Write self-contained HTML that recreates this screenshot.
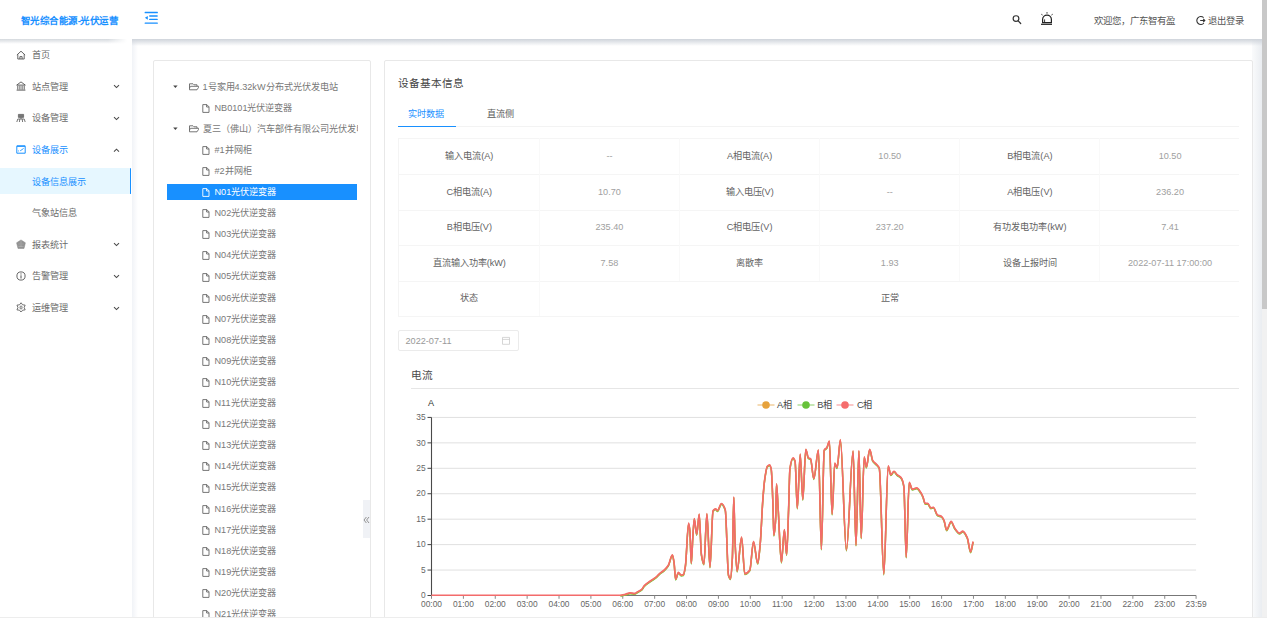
<!DOCTYPE html><html lang="zh-CN"><head><meta charset="utf-8"><style>
*{box-sizing:border-box;margin:0;padding:0}
html,body{width:1267px;height:618px;overflow:hidden;background:#fff;font-family:"Liberation Sans",sans-serif;color:#606266}
.a{position:absolute;white-space:nowrap}
.t9{font-size:9.13px;line-height:12px}
.t10{font-size:10.66px;line-height:14px}
</style></head><body>

<div class="a" style="left:0;top:0;width:1267px;height:39px;background:#fff"></div>
<div class="a" style="left:0;top:39px;width:127px;height:5px;background:linear-gradient(#d5d9de,rgba(255,255,255,0));-webkit-mask-image:linear-gradient(90deg,#000 85%,transparent)"></div>
<div class="a" style="left:132px;top:39px;width:6px;height:579px;background:linear-gradient(90deg,#f1f3f7,rgba(255,255,255,0))"></div>
<div class="a" style="left:21px;top:15.2px;font-size:9.5px;line-height:12px;font-weight:bold;letter-spacing:-0.55px;color:#1890ff">智光综合能源-光伏运营</div>
<svg class="a" style="left:144px;top:11px" width="15" height="14" viewBox="0 0 15 14">
<rect x="0.6" y="0.85" width="13.3" height="1.4" rx="0.6" fill="#1890ff"/>
<rect x="5.1" y="4.3" width="8.7" height="1.4" rx="0.6" fill="#1890ff"/>
<rect x="5.1" y="7.7" width="8.7" height="1.4" rx="0.6" fill="#1890ff"/>
<rect x="0.6" y="11.4" width="13.3" height="1.4" rx="0.6" fill="#1890ff"/>
<path d="M0.9 6.8 L3.8 4.9 L3.8 8.7Z" fill="#1890ff"/>
</svg>
<svg class="a" style="left:1010px;top:13px" width="14" height="14" viewBox="0 0 14 14">
<circle cx="6" cy="5.6" r="2.85" fill="none" stroke="#333" stroke-width="1.2"/>
<path d="M8.2 7.9 L10.7 10.5" stroke="#333" stroke-width="1.25" stroke-linecap="round"/>
</svg>
<svg class="a" style="left:1039px;top:10px" width="16" height="17" viewBox="0 0 16 17">
<path d="M3.6 12.7 V9.6 A4.4 4.4 0 0 1 12.4 9.6 V12.7 Z" fill="none" stroke="#222" stroke-width="1.2"/>
<path d="M5.6 12.3 V9.4" stroke="#222" stroke-width="0.9"/>
<rect x="2" y="13.7" width="11" height="1.2" fill="#222"/>
<path d="M8 2.2 V3.6 M2.4 4.3 L3.5 5 M13.6 4.3 L12.5 5" stroke="#222" stroke-width="1"/>
</svg>
<div class="a" style="left:1094.3px;top:15px;font-size:9.45px;line-height:12px;color:#555">欢迎您，广东智有盈</div>
<svg class="a" style="left:1195px;top:15px" width="11" height="11" viewBox="0 0 11 11">
<path d="M8.6 2.6 A4 4 0 1 0 8.9 8" fill="none" stroke="#333" stroke-width="1.1"/>
<path d="M5.2 5.5 H9.8 M8.2 3.9 L9.8 5.5 L8.2 7.1" fill="none" stroke="#333" stroke-width="1.1"/>
</svg>
<div class="a" style="left:1207.8px;top:15px;font-size:9.3px;line-height:12px;color:#555">退出登录</div>
<div class="a" style="left:1252px;top:39px;width:10px;height:579px;background:linear-gradient(90deg,#fafbfc,#eaedf1)"></div>
<div class="a" style="left:1262px;top:309px;width:5px;height:309px;background:#f1f1f1"></div>
<div class="a" style="left:1262px;top:0;width:5px;height:309px;background:#c8c8c8"></div>
<div class="a" style="left:132px;top:39px;width:1130px;height:7px;background:linear-gradient(#cfd4db,rgba(255,255,255,0))"></div>
<div class="a" style="left:0;top:168px;width:130px;height:26.2px;background:#e6f7ff"></div>
<div class="a" style="left:129.6px;top:168px;width:1.7px;height:26.2px;background:#1890ff;border-radius:1px"></div>
<div class="a t9" style="left:32px;top:49.10px;color:#6c6c6c">首页</div>
<svg class="a" style="left:15.5px;top:49.5px" width="10" height="10" viewBox="0 0 10 10"><path d="M0.9 5 L5 1.2 L9.1 5 M1.8 4.3 V9 H8.2 V4.3 M3.9 9 V6.6 H6.1 V9" fill="none" stroke="#555" stroke-width="0.9" stroke-linejoin="round"/></svg>
<div class="a t9" style="left:32px;top:80.80px;color:#6c6c6c">站点管理</div>
<svg class="a" style="left:15.5px;top:81.2px" width="10" height="10" viewBox="0 0 10 10"><path d="M0.7 4.1 L5 0.9 L9.3 4.1Z" fill="none" stroke="#555" stroke-width="0.9" stroke-linejoin="round"/><path d="M1.8 4.7V8.6M3.9 4.7V8.6M6.1 4.7V8.6M8.2 4.7V8.6M0.6 9.1H9.4" stroke="#555" stroke-width="0.95"/></svg>
<svg class="a" style="left:113.3px;top:84.4px" width="7" height="5" viewBox="0 0 7 5"><path d="M1 1.2 L3.5 3.6 L6 1.2" fill="none" stroke="#4a4a4a" stroke-width="1.05"/></svg>
<div class="a t9" style="left:32px;top:112.40px;color:#6c6c6c">设备管理</div>
<svg class="a" style="left:15.5px;top:112.8px" width="10" height="10" viewBox="0 0 10 10"><path d="M2.4 1.4 H7.6 V4.4 H2.4Z" fill="#777" stroke="#666" stroke-width="0.8"/><path d="M5 4.4 V6 M1.8 6 H8.2 M1.8 6 L0.8 9 M8.2 6 L9.2 9 M3.8 6 L3.4 9 M6.2 6 L6.6 9" stroke="#666" stroke-width="0.9" fill="none"/></svg>
<svg class="a" style="left:113.3px;top:116.0px" width="7" height="5" viewBox="0 0 7 5"><path d="M1 1.2 L3.5 3.6 L6 1.2" fill="none" stroke="#4a4a4a" stroke-width="1.05"/></svg>
<div class="a t9" style="left:32px;top:144.00px;color:#1890ff">设备展示</div>
<svg class="a" style="left:15.5px;top:144.4px" width="10" height="10" viewBox="0 0 10 10"><path d="M0.8 2.2 H9.2 V9.2 H0.8Z" fill="none" stroke="#1890ff" stroke-width="1"/><path d="M0.8 2 H9.2" stroke="#1890ff" stroke-width="1.3"/><path d="M2.2 7 L3 6.8 M4.2 6.8 L6 5.6 L7.6 4.4" fill="none" stroke="#1890ff" stroke-width="0.9"/></svg>
<svg class="a" style="left:113.3px;top:147.6px" width="7" height="5" viewBox="0 0 7 5"><path d="M1 3.6 L3.5 1.2 L6 3.6" fill="none" stroke="#4a4a4a" stroke-width="1.05"/></svg>
<div class="a t9" style="left:32px;top:175.60px;color:#1890ff">设备信息展示</div>
<div class="a t9" style="left:32px;top:207.20px;color:#6c6c6c">气象站信息</div>
<div class="a t9" style="left:32px;top:238.80px;color:#6c6c6c">报表统计</div>
<svg class="a" style="left:15.5px;top:239.2px" width="10" height="10" viewBox="0 0 10 10"><path d="M5 0.9 L9.4 3.8 L8 9.5 H2 L0.6 3.8Z" fill="#939393" stroke="#888" stroke-width="0.5" stroke-linejoin="round"/><path d="M5 1.5 V8 M2.6 5 H3.6 M6.4 5 H7.4 M2.4 7.4 H7.6" stroke="#c8c8c8" stroke-width="0.45"/></svg>
<svg class="a" style="left:113.3px;top:242.39999999999998px" width="7" height="5" viewBox="0 0 7 5"><path d="M1 1.2 L3.5 3.6 L6 1.2" fill="none" stroke="#4a4a4a" stroke-width="1.05"/></svg>
<div class="a t9" style="left:32px;top:270.40px;color:#6c6c6c">告警管理</div>
<svg class="a" style="left:15.5px;top:270.8px" width="10" height="10" viewBox="0 0 10 10"><circle cx="5" cy="5" r="4.1" fill="none" stroke="#555" stroke-width="0.9"/><path d="M5 4.3 V7.5" stroke="#555" stroke-width="1"/><circle cx="5" cy="2.9" r="0.6" fill="#555"/></svg>
<svg class="a" style="left:113.3px;top:274.0px" width="7" height="5" viewBox="0 0 7 5"><path d="M1 1.2 L3.5 3.6 L6 1.2" fill="none" stroke="#4a4a4a" stroke-width="1.05"/></svg>
<div class="a t9" style="left:32px;top:302.00px;color:#6c6c6c">运维管理</div>
<svg class="a" style="left:15.5px;top:302.4px" width="10" height="10" viewBox="0 0 10 10"><path d="M5.05 0.75 L3.50 2.82 L0.94 3.13 L1.95 5.50 L0.94 7.88 L3.50 8.18 L5.05 10.25 L6.60 8.18 L9.16 7.88 L8.15 5.50 L9.16 3.12 L6.60 2.82Z" fill="none" stroke="#5a5a5a" stroke-width="0.85" stroke-linejoin="round"/><rect x="4.1" y="4" width="1.9" height="3" rx="0.9" fill="none" stroke="#5a5a5a" stroke-width="0.8"/></svg>
<svg class="a" style="left:113.3px;top:305.59999999999997px" width="7" height="5" viewBox="0 0 7 5"><path d="M1 1.2 L3.5 3.6 L6 1.2" fill="none" stroke="#4a4a4a" stroke-width="1.05"/></svg>
<div class="a" style="left:153px;top:60px;width:218px;height:600px;border:1px solid #e8e8e8;border-radius:2px;background:#fff"></div>
<div class="a" style="left:384px;top:60px;width:869px;height:600px;border:1px solid #e8e8e8;border-radius:2px;background:#fff"></div>
<svg class="a" style="left:172.5px;top:85.0px" width="5" height="4" viewBox="0 0 5 4"><path d="M0.2 0.6 H4.6 L2.4 2.9Z" fill="#444"/></svg>
<svg class="a" style="left:189px;top:83.2px" width="10" height="8" viewBox="0 0 10 8"><path d="M0.5 0.8 H4 L5 1.8 H8 V3.3 M0.5 0.8 V6.8 H8 L9.6 4.3 V3.3 H1.5 L0.5 5" fill="none" stroke="#666" stroke-width="0.9" stroke-linejoin="round"/></svg>
<div class="a t9" style="left:202.5px;top:80.5px;color:#787878;width:155px;overflow:hidden">1号家用4.32kW分布式光伏发电站</div>
<svg class="a" style="left:202px;top:103.69999999999999px" width="8" height="9" viewBox="0 0 8 9"><path d="M0.8 0.6 H4.8 L7 2.8 V8.4 H0.8Z M4.6 0.6 V3 H7" fill="none" stroke="#666" stroke-width="0.9"/></svg>
<div class="a t9" style="left:214.5px;top:101.6px;color:#787878">NB0101光伏逆变器</div>
<svg class="a" style="left:172.5px;top:127.19999999999999px" width="5" height="4" viewBox="0 0 5 4"><path d="M0.2 0.6 H4.6 L2.4 2.9Z" fill="#444"/></svg>
<svg class="a" style="left:189px;top:125.39999999999999px" width="10" height="8" viewBox="0 0 10 8"><path d="M0.5 0.8 H4 L5 1.8 H8 V3.3 M0.5 0.8 V6.8 H8 L9.6 4.3 V3.3 H1.5 L0.5 5" fill="none" stroke="#666" stroke-width="0.9" stroke-linejoin="round"/></svg>
<div class="a t9" style="left:202.5px;top:122.69999999999999px;color:#787878;width:155px;overflow:hidden">夏三（佛山）汽车部件有限公司光伏发电站</div>
<svg class="a" style="left:202px;top:145.9px" width="8" height="9" viewBox="0 0 8 9"><path d="M0.8 0.6 H4.8 L7 2.8 V8.4 H0.8Z M4.6 0.6 V3 H7" fill="none" stroke="#666" stroke-width="0.9"/></svg>
<div class="a t9" style="left:214.5px;top:143.8px;color:#787878">#1并网柜</div>
<svg class="a" style="left:202px;top:167.0px" width="8" height="9" viewBox="0 0 8 9"><path d="M0.8 0.6 H4.8 L7 2.8 V8.4 H0.8Z M4.6 0.6 V3 H7" fill="none" stroke="#666" stroke-width="0.9"/></svg>
<div class="a t9" style="left:214.5px;top:164.9px;color:#787878">#2并网柜</div>
<div class="a" style="left:167px;top:184.1px;width:190px;height:16px;background:#1890ff"></div>
<svg class="a" style="left:202px;top:188.1px" width="8" height="9" viewBox="0 0 8 9"><path d="M0.8 0.6 H4.8 L7 2.8 V8.4 H0.8Z M4.6 0.6 V3 H7" fill="none" stroke="#fff" stroke-width="0.9"/></svg>
<div class="a t9" style="left:214.5px;top:186.0px;color:#fff">N01光伏逆变器</div>
<svg class="a" style="left:202px;top:209.20000000000002px" width="8" height="9" viewBox="0 0 8 9"><path d="M0.8 0.6 H4.8 L7 2.8 V8.4 H0.8Z M4.6 0.6 V3 H7" fill="none" stroke="#666" stroke-width="0.9"/></svg>
<div class="a t9" style="left:214.5px;top:207.10000000000002px;color:#787878">N02光伏逆变器</div>
<svg class="a" style="left:202px;top:230.3px" width="8" height="9" viewBox="0 0 8 9"><path d="M0.8 0.6 H4.8 L7 2.8 V8.4 H0.8Z M4.6 0.6 V3 H7" fill="none" stroke="#666" stroke-width="0.9"/></svg>
<div class="a t9" style="left:214.5px;top:228.20000000000002px;color:#787878">N03光伏逆变器</div>
<svg class="a" style="left:202px;top:251.4px" width="8" height="9" viewBox="0 0 8 9"><path d="M0.8 0.6 H4.8 L7 2.8 V8.4 H0.8Z M4.6 0.6 V3 H7" fill="none" stroke="#666" stroke-width="0.9"/></svg>
<div class="a t9" style="left:214.5px;top:249.3px;color:#787878">N04光伏逆变器</div>
<svg class="a" style="left:202px;top:272.5px" width="8" height="9" viewBox="0 0 8 9"><path d="M0.8 0.6 H4.8 L7 2.8 V8.4 H0.8Z M4.6 0.6 V3 H7" fill="none" stroke="#666" stroke-width="0.9"/></svg>
<div class="a t9" style="left:214.5px;top:270.4px;color:#787878">N05光伏逆变器</div>
<svg class="a" style="left:202px;top:293.6px" width="8" height="9" viewBox="0 0 8 9"><path d="M0.8 0.6 H4.8 L7 2.8 V8.4 H0.8Z M4.6 0.6 V3 H7" fill="none" stroke="#666" stroke-width="0.9"/></svg>
<div class="a t9" style="left:214.5px;top:291.5px;color:#787878">N06光伏逆变器</div>
<svg class="a" style="left:202px;top:314.70000000000005px" width="8" height="9" viewBox="0 0 8 9"><path d="M0.8 0.6 H4.8 L7 2.8 V8.4 H0.8Z M4.6 0.6 V3 H7" fill="none" stroke="#666" stroke-width="0.9"/></svg>
<div class="a t9" style="left:214.5px;top:312.6px;color:#787878">N07光伏逆变器</div>
<svg class="a" style="left:202px;top:335.80000000000007px" width="8" height="9" viewBox="0 0 8 9"><path d="M0.8 0.6 H4.8 L7 2.8 V8.4 H0.8Z M4.6 0.6 V3 H7" fill="none" stroke="#666" stroke-width="0.9"/></svg>
<div class="a t9" style="left:214.5px;top:333.70000000000005px;color:#787878">N08光伏逆变器</div>
<svg class="a" style="left:202px;top:356.90000000000003px" width="8" height="9" viewBox="0 0 8 9"><path d="M0.8 0.6 H4.8 L7 2.8 V8.4 H0.8Z M4.6 0.6 V3 H7" fill="none" stroke="#666" stroke-width="0.9"/></svg>
<div class="a t9" style="left:214.5px;top:354.8px;color:#787878">N09光伏逆变器</div>
<svg class="a" style="left:202px;top:378.00000000000006px" width="8" height="9" viewBox="0 0 8 9"><path d="M0.8 0.6 H4.8 L7 2.8 V8.4 H0.8Z M4.6 0.6 V3 H7" fill="none" stroke="#666" stroke-width="0.9"/></svg>
<div class="a t9" style="left:214.5px;top:375.90000000000003px;color:#787878">N10光伏逆变器</div>
<svg class="a" style="left:202px;top:399.1px" width="8" height="9" viewBox="0 0 8 9"><path d="M0.8 0.6 H4.8 L7 2.8 V8.4 H0.8Z M4.6 0.6 V3 H7" fill="none" stroke="#666" stroke-width="0.9"/></svg>
<div class="a t9" style="left:214.5px;top:397.0px;color:#787878">N11光伏逆变器</div>
<svg class="a" style="left:202px;top:420.20000000000005px" width="8" height="9" viewBox="0 0 8 9"><path d="M0.8 0.6 H4.8 L7 2.8 V8.4 H0.8Z M4.6 0.6 V3 H7" fill="none" stroke="#666" stroke-width="0.9"/></svg>
<div class="a t9" style="left:214.5px;top:418.1px;color:#787878">N12光伏逆变器</div>
<svg class="a" style="left:202px;top:441.30000000000007px" width="8" height="9" viewBox="0 0 8 9"><path d="M0.8 0.6 H4.8 L7 2.8 V8.4 H0.8Z M4.6 0.6 V3 H7" fill="none" stroke="#666" stroke-width="0.9"/></svg>
<div class="a t9" style="left:214.5px;top:439.20000000000005px;color:#787878">N13光伏逆变器</div>
<svg class="a" style="left:202px;top:462.40000000000003px" width="8" height="9" viewBox="0 0 8 9"><path d="M0.8 0.6 H4.8 L7 2.8 V8.4 H0.8Z M4.6 0.6 V3 H7" fill="none" stroke="#666" stroke-width="0.9"/></svg>
<div class="a t9" style="left:214.5px;top:460.3px;color:#787878">N14光伏逆变器</div>
<svg class="a" style="left:202px;top:483.50000000000006px" width="8" height="9" viewBox="0 0 8 9"><path d="M0.8 0.6 H4.8 L7 2.8 V8.4 H0.8Z M4.6 0.6 V3 H7" fill="none" stroke="#666" stroke-width="0.9"/></svg>
<div class="a t9" style="left:214.5px;top:481.40000000000003px;color:#787878">N15光伏逆变器</div>
<svg class="a" style="left:202px;top:504.6px" width="8" height="9" viewBox="0 0 8 9"><path d="M0.8 0.6 H4.8 L7 2.8 V8.4 H0.8Z M4.6 0.6 V3 H7" fill="none" stroke="#666" stroke-width="0.9"/></svg>
<div class="a t9" style="left:214.5px;top:502.5px;color:#787878">N16光伏逆变器</div>
<svg class="a" style="left:202px;top:525.7px" width="8" height="9" viewBox="0 0 8 9"><path d="M0.8 0.6 H4.8 L7 2.8 V8.4 H0.8Z M4.6 0.6 V3 H7" fill="none" stroke="#666" stroke-width="0.9"/></svg>
<div class="a t9" style="left:214.5px;top:523.6px;color:#787878">N17光伏逆变器</div>
<svg class="a" style="left:202px;top:546.8000000000001px" width="8" height="9" viewBox="0 0 8 9"><path d="M0.8 0.6 H4.8 L7 2.8 V8.4 H0.8Z M4.6 0.6 V3 H7" fill="none" stroke="#666" stroke-width="0.9"/></svg>
<div class="a t9" style="left:214.5px;top:544.7px;color:#787878">N18光伏逆变器</div>
<svg class="a" style="left:202px;top:567.9px" width="8" height="9" viewBox="0 0 8 9"><path d="M0.8 0.6 H4.8 L7 2.8 V8.4 H0.8Z M4.6 0.6 V3 H7" fill="none" stroke="#666" stroke-width="0.9"/></svg>
<div class="a t9" style="left:214.5px;top:565.8px;color:#787878">N19光伏逆变器</div>
<svg class="a" style="left:202px;top:589.0000000000001px" width="8" height="9" viewBox="0 0 8 9"><path d="M0.8 0.6 H4.8 L7 2.8 V8.4 H0.8Z M4.6 0.6 V3 H7" fill="none" stroke="#666" stroke-width="0.9"/></svg>
<div class="a t9" style="left:214.5px;top:586.9000000000001px;color:#787878">N20光伏逆变器</div>
<svg class="a" style="left:202px;top:610.1px" width="8" height="9" viewBox="0 0 8 9"><path d="M0.8 0.6 H4.8 L7 2.8 V8.4 H0.8Z M4.6 0.6 V3 H7" fill="none" stroke="#666" stroke-width="0.9"/></svg>
<div class="a t9" style="left:214.5px;top:608.0px;color:#787878">N21光伏逆变器</div>
<div class="a" style="left:362.5px;top:500px;width:7.5px;height:37.5px;background:#f0f2f6"></div>
<svg class="a" style="left:363px;top:516px" width="7" height="8" viewBox="0 0 7 8"><path d="M3.4 1 L1 4 L3.4 7 M6 1 L3.6 4 L6 7" fill="none" stroke="#888" stroke-width="0.9"/></svg>
<div class="a t10" style="left:398px;top:76px;color:#444">设备基本信息</div>
<div class="a" style="left:398px;top:126px;width:841px;height:1px;background:#f3f3f3"></div>
<div class="a" style="left:398px;top:125.8px;width:58px;height:1.6px;background:#1890ff"></div>
<div class="a t9" style="left:408.3px;top:107.8px;color:#1890ff">实时数据</div>
<div class="a t9" style="left:487px;top:107.8px;color:#5a5a5a">直流侧</div>
<div class="a" style="left:398px;top:138.4px;width:841px;height:1px;background:#f5f5f5"></div>
<div class="a" style="left:398px;top:174px;width:841px;height:1px;background:#f5f5f5"></div>
<div class="a" style="left:398px;top:209.6px;width:841px;height:1px;background:#f5f5f5"></div>
<div class="a" style="left:398px;top:245.1px;width:841px;height:1px;background:#f5f5f5"></div>
<div class="a" style="left:398px;top:280.7px;width:841px;height:1px;background:#f5f5f5"></div>
<div class="a" style="left:398px;top:316.3px;width:841px;height:1px;background:#f5f5f5"></div>
<div class="a" style="left:398px;top:138.4px;width:1px;height:178px;background:#f4f4f4"></div>
<div class="a" style="left:538.75px;top:138.4px;width:1px;height:178px;background:#f9f9f9"></div>
<div class="a" style="left:678.90px;top:138.4px;width:1px;height:142.3px;background:#f9f9f9"></div>
<div class="a" style="left:819.05px;top:138.4px;width:1px;height:142.3px;background:#f9f9f9"></div>
<div class="a" style="left:959.20px;top:138.4px;width:1px;height:142.3px;background:#f9f9f9"></div>
<div class="a" style="left:1099.35px;top:138.4px;width:1px;height:142.3px;background:#f9f9f9"></div>
<div class="a t9" style="left:399.30px;width:140px;text-align:center;top:149.90px;color:#626262">输入电流(A)</div>
<div class="a t9" style="left:539.45px;width:140px;text-align:center;top:149.90px;color:#a0a0a0">--</div>
<div class="a t9" style="left:679.60px;width:140px;text-align:center;top:149.90px;color:#626262">A相电流(A)</div>
<div class="a t9" style="left:819.75px;width:140px;text-align:center;top:149.90px;color:#a0a0a0">10.50</div>
<div class="a t9" style="left:959.90px;width:140px;text-align:center;top:149.90px;color:#626262">B相电流(A)</div>
<div class="a t9" style="left:1100.05px;width:140px;text-align:center;top:149.90px;color:#a0a0a0">10.50</div>
<div class="a t9" style="left:399.30px;width:140px;text-align:center;top:185.50px;color:#626262">C相电流(A)</div>
<div class="a t9" style="left:539.45px;width:140px;text-align:center;top:185.50px;color:#a0a0a0">10.70</div>
<div class="a t9" style="left:679.60px;width:140px;text-align:center;top:185.50px;color:#626262">输入电压(V)</div>
<div class="a t9" style="left:819.75px;width:140px;text-align:center;top:185.50px;color:#a0a0a0">--</div>
<div class="a t9" style="left:959.90px;width:140px;text-align:center;top:185.50px;color:#626262">A相电压(V)</div>
<div class="a t9" style="left:1100.05px;width:140px;text-align:center;top:185.50px;color:#a0a0a0">236.20</div>
<div class="a t9" style="left:399.30px;width:140px;text-align:center;top:221.05px;color:#626262">B相电压(V)</div>
<div class="a t9" style="left:539.45px;width:140px;text-align:center;top:221.05px;color:#a0a0a0">235.40</div>
<div class="a t9" style="left:679.60px;width:140px;text-align:center;top:221.05px;color:#626262">C相电压(V)</div>
<div class="a t9" style="left:819.75px;width:140px;text-align:center;top:221.05px;color:#a0a0a0">237.20</div>
<div class="a t9" style="left:959.90px;width:140px;text-align:center;top:221.05px;color:#626262">有功发电功率(kW)</div>
<div class="a t9" style="left:1100.05px;width:140px;text-align:center;top:221.05px;color:#a0a0a0">7.41</div>
<div class="a t9" style="left:399.30px;width:140px;text-align:center;top:256.60px;color:#626262">直流输入功率(kW)</div>
<div class="a t9" style="left:539.45px;width:140px;text-align:center;top:256.60px;color:#a0a0a0">7.58</div>
<div class="a t9" style="left:679.60px;width:140px;text-align:center;top:256.60px;color:#626262">离散率</div>
<div class="a t9" style="left:819.75px;width:140px;text-align:center;top:256.60px;color:#a0a0a0">1.93</div>
<div class="a t9" style="left:959.90px;width:140px;text-align:center;top:256.60px;color:#626262">设备上报时间</div>
<div class="a t9" style="left:1100.05px;width:140px;text-align:center;top:256.60px;color:#a0a0a0">2022-07-11 17:00:00</div>
<div class="a t9" style="left:399.30px;width:140px;text-align:center;top:292.20px;color:#626262">状态</div>
<div class="a t9" style="left:819.75px;width:140px;text-align:center;top:292.20px;color:#626262">正常</div>
<div class="a" style="left:398px;top:330px;width:121px;height:21px;border:1px solid #ebebeb;border-radius:2px"></div>
<div class="a t9" style="left:405.5px;top:334.5px;color:#999">2022-07-11</div>
<svg class="a" style="left:501px;top:336px" width="10" height="9" viewBox="0 0 10 9"><path d="M1.5 1.4 H8.5 V8.3 H1.5Z M1.5 3.4 H8.5" fill="none" stroke="#c8c8c8" stroke-width="0.75"/></svg>
<div class="a t10" style="left:411px;top:368px;color:#4a4a4a">电流</div>
<div class="a" style="left:411px;top:387.8px;width:828px;height:1px;background:#e6e6e6"></div>
<div class="a" style="left:0;top:617px;width:1267px;height:1px;background:#ededed;z-index:5"></div>
<svg class="a" style="left:0;top:0" width="1267" height="618" viewBox="0 0 1267 618">
<line x1="431.5" y1="570.06" x2="1196.09" y2="570.06" stroke="#e0e0e0" stroke-width="1"/>
<line x1="431.5" y1="544.62" x2="1196.09" y2="544.62" stroke="#e0e0e0" stroke-width="1"/>
<line x1="431.5" y1="519.18" x2="1196.09" y2="519.18" stroke="#e0e0e0" stroke-width="1"/>
<line x1="431.5" y1="493.74" x2="1196.09" y2="493.74" stroke="#e0e0e0" stroke-width="1"/>
<line x1="431.5" y1="468.30" x2="1196.09" y2="468.30" stroke="#e0e0e0" stroke-width="1"/>
<line x1="431.5" y1="442.86" x2="1196.09" y2="442.86" stroke="#e0e0e0" stroke-width="1"/>
<line x1="431.5" y1="417.42" x2="1196.09" y2="417.42" stroke="#e0e0e0" stroke-width="1"/>
<line x1="431.5" y1="417.42" x2="431.5" y2="596.0" stroke="#4a4a4a" stroke-width="1.1"/>
<line x1="427.5" y1="595.50" x2="431.5" y2="595.50" stroke="#444" stroke-width="1"/>
<line x1="427.5" y1="570.06" x2="431.5" y2="570.06" stroke="#444" stroke-width="1"/>
<line x1="427.5" y1="544.62" x2="431.5" y2="544.62" stroke="#444" stroke-width="1"/>
<line x1="427.5" y1="519.18" x2="431.5" y2="519.18" stroke="#444" stroke-width="1"/>
<line x1="427.5" y1="493.74" x2="431.5" y2="493.74" stroke="#444" stroke-width="1"/>
<line x1="427.5" y1="468.30" x2="431.5" y2="468.30" stroke="#444" stroke-width="1"/>
<line x1="427.5" y1="442.86" x2="431.5" y2="442.86" stroke="#444" stroke-width="1"/>
<line x1="427.5" y1="417.42" x2="431.5" y2="417.42" stroke="#444" stroke-width="1"/>
<line x1="430.9" y1="595.5" x2="1196.09" y2="595.5" stroke="#777" stroke-width="1.1"/>
<line x1="431.50" y1="595.5" x2="431.50" y2="598.8" stroke="#888" stroke-width="1"/>
<line x1="463.38" y1="595.5" x2="463.38" y2="598.8" stroke="#888" stroke-width="1"/>
<line x1="495.26" y1="595.5" x2="495.26" y2="598.8" stroke="#888" stroke-width="1"/>
<line x1="527.14" y1="595.5" x2="527.14" y2="598.8" stroke="#888" stroke-width="1"/>
<line x1="559.02" y1="595.5" x2="559.02" y2="598.8" stroke="#888" stroke-width="1"/>
<line x1="590.90" y1="595.5" x2="590.90" y2="598.8" stroke="#888" stroke-width="1"/>
<line x1="622.78" y1="595.5" x2="622.78" y2="598.8" stroke="#888" stroke-width="1"/>
<line x1="654.66" y1="595.5" x2="654.66" y2="598.8" stroke="#888" stroke-width="1"/>
<line x1="686.54" y1="595.5" x2="686.54" y2="598.8" stroke="#888" stroke-width="1"/>
<line x1="718.42" y1="595.5" x2="718.42" y2="598.8" stroke="#888" stroke-width="1"/>
<line x1="750.30" y1="595.5" x2="750.30" y2="598.8" stroke="#888" stroke-width="1"/>
<line x1="782.18" y1="595.5" x2="782.18" y2="598.8" stroke="#888" stroke-width="1"/>
<line x1="814.06" y1="595.5" x2="814.06" y2="598.8" stroke="#888" stroke-width="1"/>
<line x1="845.94" y1="595.5" x2="845.94" y2="598.8" stroke="#888" stroke-width="1"/>
<line x1="877.82" y1="595.5" x2="877.82" y2="598.8" stroke="#888" stroke-width="1"/>
<line x1="909.70" y1="595.5" x2="909.70" y2="598.8" stroke="#888" stroke-width="1"/>
<line x1="941.58" y1="595.5" x2="941.58" y2="598.8" stroke="#888" stroke-width="1"/>
<line x1="973.46" y1="595.5" x2="973.46" y2="598.8" stroke="#888" stroke-width="1"/>
<line x1="1005.34" y1="595.5" x2="1005.34" y2="598.8" stroke="#888" stroke-width="1"/>
<line x1="1037.22" y1="595.5" x2="1037.22" y2="598.8" stroke="#888" stroke-width="1"/>
<line x1="1069.10" y1="595.5" x2="1069.10" y2="598.8" stroke="#888" stroke-width="1"/>
<line x1="1100.98" y1="595.5" x2="1100.98" y2="598.8" stroke="#888" stroke-width="1"/>
<line x1="1132.86" y1="595.5" x2="1132.86" y2="598.8" stroke="#888" stroke-width="1"/>
<line x1="1164.74" y1="595.5" x2="1164.74" y2="598.8" stroke="#888" stroke-width="1"/>
<line x1="1196.09" y1="595.5" x2="1196.09" y2="598.8" stroke="#888" stroke-width="1"/>
<path d="M620.40 596.10 C622.10 595.77 623.80 595.50 625.50 595.10 C627.00 594.75 628.50 593.80 630.00 593.80 C631.53 593.80 633.07 594.30 634.60 594.30 C635.67 594.30 636.73 593.11 637.80 592.50 C639.10 591.75 640.40 591.31 641.70 590.20 C642.57 589.46 643.43 587.43 644.30 586.50 C645.80 584.90 647.30 583.89 648.80 582.80 C650.33 581.68 651.87 580.86 653.40 579.80 C654.27 579.20 655.13 578.62 656.00 577.90 C657.27 576.85 658.53 575.29 659.80 574.20 C661.33 572.89 662.87 572.11 664.40 570.70 C665.70 569.50 667.00 568.27 668.30 566.20 C669.67 564.03 671.03 555.60 672.40 555.60 C672.97 555.60 673.53 559.85 674.10 563.60 C674.60 566.91 675.10 579.90 675.60 579.90 C676.53 579.90 677.47 573.30 678.40 573.30 C679.33 573.30 680.27 575.90 681.20 575.90 C681.93 575.90 682.67 575.76 683.40 575.50 C684.07 575.26 684.73 570.95 685.40 566.70 C686.47 559.90 687.53 524.00 688.60 524.00 C689.03 524.00 689.47 527.71 689.90 531.80 C690.37 536.21 690.83 564.00 691.30 564.00 C691.80 564.00 692.30 545.56 692.80 538.30 C693.30 531.04 693.80 519.40 694.30 519.40 C695.10 519.40 695.90 535.20 696.70 535.20 C697.53 535.20 698.37 514.90 699.20 514.90 C699.93 514.90 700.67 550.34 701.40 555.10 C702.23 560.51 703.07 564.80 703.90 564.80 C704.90 564.80 705.90 514.40 706.90 514.40 C707.93 514.40 708.97 567.80 710.00 567.80 C711.00 567.80 712.00 513.22 713.00 511.70 C713.87 510.39 714.73 509.60 715.60 509.60 C716.23 509.60 716.87 511.40 717.50 511.40 C718.80 511.40 720.10 504.40 721.40 504.40 C722.70 504.40 724.00 506.70 725.30 510.70 C726.37 513.98 727.43 572.40 728.50 575.80 C729.17 577.92 729.83 579.50 730.50 579.50 C731.13 579.50 731.77 569.51 732.40 557.70 C732.87 549.00 733.33 497.70 733.80 497.70 C734.20 497.70 734.60 532.19 735.00 540.90 C735.70 556.14 736.40 571.90 737.10 571.90 C738.60 571.90 740.10 537.90 741.60 537.90 C742.67 537.90 743.73 574.50 744.80 574.50 C746.47 574.50 748.13 573.19 749.80 570.90 C751.03 569.20 752.27 542.20 753.50 542.20 C754.90 542.20 756.30 564.10 757.70 564.10 C758.53 564.10 759.37 553.53 760.20 544.70 C761.07 535.51 761.93 512.28 762.80 500.90 C763.43 492.59 764.07 484.53 764.70 480.10 C765.57 474.03 766.43 468.03 767.30 467.10 C768.07 466.28 768.83 465.70 769.60 465.70 C770.13 465.70 770.67 467.37 771.20 469.70 C771.83 472.47 772.47 492.07 773.10 509.90 C773.33 516.47 773.57 535.90 773.80 535.90 C774.43 535.90 775.07 529.19 775.70 518.90 C775.97 514.57 776.23 484.60 776.50 484.60 C777.07 484.60 777.63 501.06 778.20 509.90 C779.27 526.53 780.33 562.90 781.40 562.90 C782.40 562.90 783.40 530.40 784.40 530.40 C785.13 530.40 785.87 555.40 786.60 555.40 C787.27 555.40 787.93 527.57 788.60 509.90 C789.03 498.42 789.47 472.72 789.90 469.70 C790.97 462.26 792.03 458.70 793.10 458.70 C793.77 458.70 794.43 459.99 795.10 462.00 C795.83 464.22 796.57 508.90 797.30 508.90 C798.27 508.90 799.23 454.90 800.20 454.90 C801.07 454.90 801.93 500.20 802.80 500.20 C803.80 500.20 804.80 450.10 805.80 450.10 C806.67 450.10 807.53 458.08 808.40 458.70 C809.13 459.22 809.87 459.07 810.60 459.60 C811.67 460.38 812.73 479.40 813.80 479.40 C815.33 479.40 816.87 450.60 818.40 450.60 C819.40 450.60 820.40 549.90 821.40 549.90 C822.33 549.90 823.27 452.79 824.20 451.00 C825.07 449.33 825.93 449.64 826.80 448.40 C827.67 447.16 828.53 441.90 829.40 441.90 C830.30 441.90 831.20 514.90 832.10 514.90 C833.00 514.90 833.90 463.90 834.80 463.90 C835.57 463.90 836.33 468.40 837.10 468.40 C838.20 468.40 839.30 440.40 840.40 440.40 C842.40 440.40 844.40 550.90 846.40 550.90 C848.63 550.90 850.87 451.60 853.10 451.60 C854.07 451.60 855.03 545.90 856.00 545.90 C856.97 545.90 857.93 451.40 858.90 451.40 C859.67 451.40 860.43 538.70 861.20 538.70 C862.20 538.70 863.20 457.70 864.20 457.70 C864.93 457.70 865.67 467.90 866.40 467.90 C867.50 467.90 868.60 450.10 869.70 450.10 C870.70 450.10 871.70 459.65 872.70 461.30 C873.97 463.39 875.23 463.73 876.50 465.20 C877.43 466.29 878.37 466.72 879.30 468.90 C880.80 472.41 882.30 574.90 883.80 574.90 C885.27 574.90 886.73 466.70 888.20 466.70 C889.07 466.70 889.93 475.60 890.80 475.60 C891.87 475.60 892.93 472.10 894.00 472.10 C895.07 472.10 896.13 474.67 897.20 475.60 C898.50 476.73 899.80 476.82 901.10 478.40 C902.03 479.53 902.97 481.82 903.90 487.40 C904.67 491.98 905.43 557.90 906.20 557.90 C907.20 557.90 908.20 483.10 909.20 483.10 C910.23 483.10 911.27 490.00 912.30 490.00 C913.80 490.00 915.30 488.70 916.80 488.70 C918.10 488.70 919.40 491.27 920.70 493.20 C921.47 494.34 922.23 495.89 923.00 497.70 C923.73 499.43 924.47 504.20 925.20 504.20 C926.07 504.20 926.93 504.20 927.80 504.20 C928.80 504.20 929.80 508.70 930.80 508.70 C931.67 508.70 932.53 508.10 933.40 508.10 C934.77 508.10 936.13 515.18 937.50 515.90 C938.80 516.58 940.10 516.41 941.40 517.10 C942.27 517.56 943.13 519.15 944.00 521.00 C944.87 522.85 945.73 530.70 946.60 530.70 C948.10 530.70 949.60 522.30 951.10 522.30 C952.40 522.30 953.70 527.69 955.00 529.40 C956.50 531.38 958.00 534.00 959.50 534.00 C960.60 534.00 961.70 532.00 962.80 532.00 C964.30 532.00 965.80 535.17 967.30 538.50 C968.40 540.94 969.50 552.70 970.60 552.70 C971.43 552.70 972.27 545.83 973.10 542.40" fill="none" stroke="#67c23a" stroke-width="1.5" stroke-linejoin="round"/>
<path d="M620.40 595.55 C622.10 595.22 623.80 594.95 625.50 594.55 C627.00 594.20 628.50 593.25 630.00 593.25 C631.53 593.25 633.07 593.75 634.60 593.75 C635.67 593.75 636.73 592.56 637.80 591.95 C639.10 591.20 640.40 590.76 641.70 589.65 C642.57 588.91 643.43 586.88 644.30 585.95 C645.80 584.35 647.30 583.34 648.80 582.25 C650.33 581.13 651.87 580.31 653.40 579.25 C654.27 578.65 655.13 578.07 656.00 577.35 C657.27 576.30 658.53 574.74 659.80 573.65 C661.33 572.34 662.87 571.56 664.40 570.15 C665.70 568.95 667.00 567.72 668.30 565.65 C669.67 563.48 671.03 555.05 672.40 555.05 C672.97 555.05 673.53 559.30 674.10 563.05 C674.60 566.36 675.10 579.35 675.60 579.35 C676.53 579.35 677.47 572.75 678.40 572.75 C679.33 572.75 680.27 575.35 681.20 575.35 C681.93 575.35 682.67 575.21 683.40 574.95 C684.07 574.71 684.73 570.40 685.40 566.15 C686.47 559.35 687.53 523.45 688.60 523.45 C689.03 523.45 689.47 527.16 689.90 531.25 C690.37 535.66 690.83 563.45 691.30 563.45 C691.80 563.45 692.30 545.01 692.80 537.75 C693.30 530.49 693.80 518.85 694.30 518.85 C695.10 518.85 695.90 534.65 696.70 534.65 C697.53 534.65 698.37 514.35 699.20 514.35 C699.93 514.35 700.67 549.79 701.40 554.55 C702.23 559.96 703.07 564.25 703.90 564.25 C704.90 564.25 705.90 513.85 706.90 513.85 C707.93 513.85 708.97 567.25 710.00 567.25 C711.00 567.25 712.00 512.67 713.00 511.15 C713.87 509.84 714.73 509.05 715.60 509.05 C716.23 509.05 716.87 510.85 717.50 510.85 C718.80 510.85 720.10 503.85 721.40 503.85 C722.70 503.85 724.00 506.15 725.30 510.15 C726.37 513.43 727.43 571.85 728.50 575.25 C729.17 577.37 729.83 578.95 730.50 578.95 C731.13 578.95 731.77 568.96 732.40 557.15 C732.87 548.45 733.33 497.15 733.80 497.15 C734.20 497.15 734.60 531.64 735.00 540.35 C735.70 555.59 736.40 571.35 737.10 571.35 C738.60 571.35 740.10 537.35 741.60 537.35 C742.67 537.35 743.73 573.95 744.80 573.95 C746.47 573.95 748.13 572.64 749.80 570.35 C751.03 568.65 752.27 541.65 753.50 541.65 C754.90 541.65 756.30 563.55 757.70 563.55 C758.53 563.55 759.37 552.98 760.20 544.15 C761.07 534.96 761.93 511.73 762.80 500.35 C763.43 492.04 764.07 483.98 764.70 479.55 C765.57 473.48 766.43 467.48 767.30 466.55 C768.07 465.73 768.83 465.15 769.60 465.15 C770.13 465.15 770.67 466.82 771.20 469.15 C771.83 471.92 772.47 491.52 773.10 509.35 C773.33 515.92 773.57 535.35 773.80 535.35 C774.43 535.35 775.07 528.64 775.70 518.35 C775.97 514.02 776.23 484.05 776.50 484.05 C777.07 484.05 777.63 500.51 778.20 509.35 C779.27 525.98 780.33 562.35 781.40 562.35 C782.40 562.35 783.40 529.85 784.40 529.85 C785.13 529.85 785.87 554.85 786.60 554.85 C787.27 554.85 787.93 527.02 788.60 509.35 C789.03 497.87 789.47 472.17 789.90 469.15 C790.97 461.71 792.03 458.15 793.10 458.15 C793.77 458.15 794.43 459.44 795.10 461.45 C795.83 463.67 796.57 508.35 797.30 508.35 C798.27 508.35 799.23 454.35 800.20 454.35 C801.07 454.35 801.93 499.65 802.80 499.65 C803.80 499.65 804.80 449.55 805.80 449.55 C806.67 449.55 807.53 457.53 808.40 458.15 C809.13 458.67 809.87 458.52 810.60 459.05 C811.67 459.83 812.73 478.85 813.80 478.85 C815.33 478.85 816.87 450.05 818.40 450.05 C819.40 450.05 820.40 549.35 821.40 549.35 C822.33 549.35 823.27 452.24 824.20 450.45 C825.07 448.78 825.93 449.09 826.80 447.85 C827.67 446.61 828.53 441.35 829.40 441.35 C830.30 441.35 831.20 514.35 832.10 514.35 C833.00 514.35 833.90 463.35 834.80 463.35 C835.57 463.35 836.33 467.85 837.10 467.85 C838.20 467.85 839.30 439.85 840.40 439.85 C842.40 439.85 844.40 550.35 846.40 550.35 C848.63 550.35 850.87 451.05 853.10 451.05 C854.07 451.05 855.03 545.35 856.00 545.35 C856.97 545.35 857.93 450.85 858.90 450.85 C859.67 450.85 860.43 538.15 861.20 538.15 C862.20 538.15 863.20 457.15 864.20 457.15 C864.93 457.15 865.67 467.35 866.40 467.35 C867.50 467.35 868.60 449.55 869.70 449.55 C870.70 449.55 871.70 459.10 872.70 460.75 C873.97 462.84 875.23 463.18 876.50 464.65 C877.43 465.74 878.37 466.17 879.30 468.35 C880.80 471.86 882.30 574.35 883.80 574.35 C885.27 574.35 886.73 466.15 888.20 466.15 C889.07 466.15 889.93 475.05 890.80 475.05 C891.87 475.05 892.93 471.55 894.00 471.55 C895.07 471.55 896.13 474.12 897.20 475.05 C898.50 476.18 899.80 476.27 901.10 477.85 C902.03 478.98 902.97 481.27 903.90 486.85 C904.67 491.43 905.43 557.35 906.20 557.35 C907.20 557.35 908.20 482.55 909.20 482.55 C910.23 482.55 911.27 489.45 912.30 489.45 C913.80 489.45 915.30 488.15 916.80 488.15 C918.10 488.15 919.40 490.72 920.70 492.65 C921.47 493.79 922.23 495.34 923.00 497.15 C923.73 498.88 924.47 503.65 925.20 503.65 C926.07 503.65 926.93 503.65 927.80 503.65 C928.80 503.65 929.80 508.15 930.80 508.15 C931.67 508.15 932.53 507.55 933.40 507.55 C934.77 507.55 936.13 514.63 937.50 515.35 C938.80 516.03 940.10 515.86 941.40 516.55 C942.27 517.01 943.13 518.60 944.00 520.45 C944.87 522.30 945.73 530.15 946.60 530.15 C948.10 530.15 949.60 521.75 951.10 521.75 C952.40 521.75 953.70 527.14 955.00 528.85 C956.50 530.83 958.00 533.45 959.50 533.45 C960.60 533.45 961.70 531.45 962.80 531.45 C964.30 531.45 965.80 534.62 967.30 537.95 C968.40 540.39 969.50 552.15 970.60 552.15 C971.43 552.15 972.27 545.28 973.10 541.85" fill="none" stroke="#e6a23c" stroke-width="1.5" stroke-linejoin="round"/>
<path d="M431.50 595.30 C494.47 595.27 557.43 595.30 620.40 595.20 C622.10 595.20 623.80 594.60 625.50 594.20 C627.00 593.85 628.50 592.90 630.00 592.90 C631.53 592.90 633.07 593.40 634.60 593.40 C635.67 593.40 636.73 592.21 637.80 591.60 C639.10 590.85 640.40 590.41 641.70 589.30 C642.57 588.56 643.43 586.53 644.30 585.60 C645.80 584.00 647.30 582.99 648.80 581.90 C650.33 580.78 651.87 579.96 653.40 578.90 C654.27 578.30 655.13 577.72 656.00 577.00 C657.27 575.95 658.53 574.39 659.80 573.30 C661.33 571.99 662.87 571.21 664.40 569.80 C665.70 568.60 667.00 567.37 668.30 565.30 C669.67 563.13 671.03 554.70 672.40 554.70 C672.97 554.70 673.53 558.95 674.10 562.70 C674.60 566.01 675.10 579.00 675.60 579.00 C676.53 579.00 677.47 572.40 678.40 572.40 C679.33 572.40 680.27 575.00 681.20 575.00 C681.93 575.00 682.67 574.86 683.40 574.60 C684.07 574.36 684.73 570.05 685.40 565.80 C686.47 559.00 687.53 523.10 688.60 523.10 C689.03 523.10 689.47 526.81 689.90 530.90 C690.37 535.31 690.83 563.10 691.30 563.10 C691.80 563.10 692.30 544.66 692.80 537.40 C693.30 530.14 693.80 518.50 694.30 518.50 C695.10 518.50 695.90 534.30 696.70 534.30 C697.53 534.30 698.37 514.00 699.20 514.00 C699.93 514.00 700.67 549.44 701.40 554.20 C702.23 559.61 703.07 563.90 703.90 563.90 C704.90 563.90 705.90 513.50 706.90 513.50 C707.93 513.50 708.97 566.90 710.00 566.90 C711.00 566.90 712.00 512.32 713.00 510.80 C713.87 509.49 714.73 508.70 715.60 508.70 C716.23 508.70 716.87 510.50 717.50 510.50 C718.80 510.50 720.10 503.50 721.40 503.50 C722.70 503.50 724.00 505.80 725.30 509.80 C726.37 513.08 727.43 571.50 728.50 574.90 C729.17 577.02 729.83 578.60 730.50 578.60 C731.13 578.60 731.77 568.61 732.40 556.80 C732.87 548.10 733.33 496.80 733.80 496.80 C734.20 496.80 734.60 531.29 735.00 540.00 C735.70 555.24 736.40 571.00 737.10 571.00 C738.60 571.00 740.10 537.00 741.60 537.00 C742.67 537.00 743.73 573.60 744.80 573.60 C746.47 573.60 748.13 572.29 749.80 570.00 C751.03 568.30 752.27 541.30 753.50 541.30 C754.90 541.30 756.30 563.20 757.70 563.20 C758.53 563.20 759.37 552.63 760.20 543.80 C761.07 534.61 761.93 511.38 762.80 500.00 C763.43 491.69 764.07 483.63 764.70 479.20 C765.57 473.13 766.43 467.13 767.30 466.20 C768.07 465.38 768.83 464.80 769.60 464.80 C770.13 464.80 770.67 466.47 771.20 468.80 C771.83 471.57 772.47 491.17 773.10 509.00 C773.33 515.57 773.57 535.00 773.80 535.00 C774.43 535.00 775.07 528.29 775.70 518.00 C775.97 513.67 776.23 483.70 776.50 483.70 C777.07 483.70 777.63 500.16 778.20 509.00 C779.27 525.63 780.33 562.00 781.40 562.00 C782.40 562.00 783.40 529.50 784.40 529.50 C785.13 529.50 785.87 554.50 786.60 554.50 C787.27 554.50 787.93 526.67 788.60 509.00 C789.03 497.52 789.47 471.82 789.90 468.80 C790.97 461.36 792.03 457.80 793.10 457.80 C793.77 457.80 794.43 459.09 795.10 461.10 C795.83 463.32 796.57 508.00 797.30 508.00 C798.27 508.00 799.23 454.00 800.20 454.00 C801.07 454.00 801.93 499.30 802.80 499.30 C803.80 499.30 804.80 449.20 805.80 449.20 C806.67 449.20 807.53 457.18 808.40 457.80 C809.13 458.32 809.87 458.17 810.60 458.70 C811.67 459.48 812.73 478.50 813.80 478.50 C815.33 478.50 816.87 449.70 818.40 449.70 C819.40 449.70 820.40 549.00 821.40 549.00 C822.33 549.00 823.27 451.89 824.20 450.10 C825.07 448.43 825.93 448.74 826.80 447.50 C827.67 446.26 828.53 441.00 829.40 441.00 C830.30 441.00 831.20 514.00 832.10 514.00 C833.00 514.00 833.90 463.00 834.80 463.00 C835.57 463.00 836.33 467.50 837.10 467.50 C838.20 467.50 839.30 439.50 840.40 439.50 C842.40 439.50 844.40 550.00 846.40 550.00 C848.63 550.00 850.87 450.70 853.10 450.70 C854.07 450.70 855.03 545.00 856.00 545.00 C856.97 545.00 857.93 450.50 858.90 450.50 C859.67 450.50 860.43 537.80 861.20 537.80 C862.20 537.80 863.20 456.80 864.20 456.80 C864.93 456.80 865.67 467.00 866.40 467.00 C867.50 467.00 868.60 449.20 869.70 449.20 C870.70 449.20 871.70 458.75 872.70 460.40 C873.97 462.49 875.23 462.83 876.50 464.30 C877.43 465.39 878.37 465.82 879.30 468.00 C880.80 471.51 882.30 574.00 883.80 574.00 C885.27 574.00 886.73 465.80 888.20 465.80 C889.07 465.80 889.93 474.70 890.80 474.70 C891.87 474.70 892.93 471.20 894.00 471.20 C895.07 471.20 896.13 473.77 897.20 474.70 C898.50 475.83 899.80 475.92 901.10 477.50 C902.03 478.63 902.97 480.92 903.90 486.50 C904.67 491.08 905.43 557.00 906.20 557.00 C907.20 557.00 908.20 482.20 909.20 482.20 C910.23 482.20 911.27 489.10 912.30 489.10 C913.80 489.10 915.30 487.80 916.80 487.80 C918.10 487.80 919.40 490.37 920.70 492.30 C921.47 493.44 922.23 494.99 923.00 496.80 C923.73 498.53 924.47 503.30 925.20 503.30 C926.07 503.30 926.93 503.30 927.80 503.30 C928.80 503.30 929.80 507.80 930.80 507.80 C931.67 507.80 932.53 507.20 933.40 507.20 C934.77 507.20 936.13 514.28 937.50 515.00 C938.80 515.68 940.10 515.51 941.40 516.20 C942.27 516.66 943.13 518.25 944.00 520.10 C944.87 521.95 945.73 529.80 946.60 529.80 C948.10 529.80 949.60 521.40 951.10 521.40 C952.40 521.40 953.70 526.79 955.00 528.50 C956.50 530.48 958.00 533.10 959.50 533.10 C960.60 533.10 961.70 531.10 962.80 531.10 C964.30 531.10 965.80 534.27 967.30 537.60 C968.40 540.04 969.50 551.80 970.60 551.80 C971.43 551.80 972.27 544.93 973.10 541.50" fill="none" stroke="#f36b6b" stroke-width="1.6" stroke-linejoin="round"/>
</svg>
<div class="a" style="font-size:8.4px;line-height:12px;left:375.7px;width:50px;text-align:right;top:589.20px;color:#666">0</div>
<div class="a" style="font-size:8.4px;line-height:12px;left:375.7px;width:50px;text-align:right;top:563.76px;color:#666">5</div>
<div class="a" style="font-size:8.4px;line-height:12px;left:375.7px;width:50px;text-align:right;top:538.32px;color:#666">10</div>
<div class="a" style="font-size:8.4px;line-height:12px;left:375.7px;width:50px;text-align:right;top:512.88px;color:#666">15</div>
<div class="a" style="font-size:8.4px;line-height:12px;left:375.7px;width:50px;text-align:right;top:487.44px;color:#666">20</div>
<div class="a" style="font-size:8.4px;line-height:12px;left:375.7px;width:50px;text-align:right;top:462.00px;color:#666">25</div>
<div class="a" style="font-size:8.4px;line-height:12px;left:375.7px;width:50px;text-align:right;top:436.56px;color:#666">30</div>
<div class="a" style="font-size:8.4px;line-height:12px;left:375.7px;width:50px;text-align:right;top:411.12px;color:#666">35</div>
<div class="a" style="left:406.50px;width:50px;text-align:center;top:598.2px;font-size:8.4px;line-height:12px;color:#666">00:00</div>
<div class="a" style="left:438.38px;width:50px;text-align:center;top:598.2px;font-size:8.4px;line-height:12px;color:#666">01:00</div>
<div class="a" style="left:470.26px;width:50px;text-align:center;top:598.2px;font-size:8.4px;line-height:12px;color:#666">02:00</div>
<div class="a" style="left:502.14px;width:50px;text-align:center;top:598.2px;font-size:8.4px;line-height:12px;color:#666">03:00</div>
<div class="a" style="left:534.02px;width:50px;text-align:center;top:598.2px;font-size:8.4px;line-height:12px;color:#666">04:00</div>
<div class="a" style="left:565.90px;width:50px;text-align:center;top:598.2px;font-size:8.4px;line-height:12px;color:#666">05:00</div>
<div class="a" style="left:597.78px;width:50px;text-align:center;top:598.2px;font-size:8.4px;line-height:12px;color:#666">06:00</div>
<div class="a" style="left:629.66px;width:50px;text-align:center;top:598.2px;font-size:8.4px;line-height:12px;color:#666">07:00</div>
<div class="a" style="left:661.54px;width:50px;text-align:center;top:598.2px;font-size:8.4px;line-height:12px;color:#666">08:00</div>
<div class="a" style="left:693.42px;width:50px;text-align:center;top:598.2px;font-size:8.4px;line-height:12px;color:#666">09:00</div>
<div class="a" style="left:725.30px;width:50px;text-align:center;top:598.2px;font-size:8.4px;line-height:12px;color:#666">10:00</div>
<div class="a" style="left:757.18px;width:50px;text-align:center;top:598.2px;font-size:8.4px;line-height:12px;color:#666">11:00</div>
<div class="a" style="left:789.06px;width:50px;text-align:center;top:598.2px;font-size:8.4px;line-height:12px;color:#666">12:00</div>
<div class="a" style="left:820.94px;width:50px;text-align:center;top:598.2px;font-size:8.4px;line-height:12px;color:#666">13:00</div>
<div class="a" style="left:852.82px;width:50px;text-align:center;top:598.2px;font-size:8.4px;line-height:12px;color:#666">14:00</div>
<div class="a" style="left:884.70px;width:50px;text-align:center;top:598.2px;font-size:8.4px;line-height:12px;color:#666">15:00</div>
<div class="a" style="left:916.58px;width:50px;text-align:center;top:598.2px;font-size:8.4px;line-height:12px;color:#666">16:00</div>
<div class="a" style="left:948.46px;width:50px;text-align:center;top:598.2px;font-size:8.4px;line-height:12px;color:#666">17:00</div>
<div class="a" style="left:980.34px;width:50px;text-align:center;top:598.2px;font-size:8.4px;line-height:12px;color:#666">18:00</div>
<div class="a" style="left:1012.22px;width:50px;text-align:center;top:598.2px;font-size:8.4px;line-height:12px;color:#666">19:00</div>
<div class="a" style="left:1044.10px;width:50px;text-align:center;top:598.2px;font-size:8.4px;line-height:12px;color:#666">20:00</div>
<div class="a" style="left:1075.98px;width:50px;text-align:center;top:598.2px;font-size:8.4px;line-height:12px;color:#666">21:00</div>
<div class="a" style="left:1107.86px;width:50px;text-align:center;top:598.2px;font-size:8.4px;line-height:12px;color:#666">22:00</div>
<div class="a" style="left:1139.74px;width:50px;text-align:center;top:598.2px;font-size:8.4px;line-height:12px;color:#666">23:00</div>
<div class="a" style="left:1171.09px;width:50px;text-align:center;top:598.2px;font-size:8.4px;line-height:12px;color:#666">23:59</div>
<div class="a t9" style="left:428px;top:397px;color:#333">A</div>
<svg class="a" style="left:756.6px;top:400px" width="18" height="10" viewBox="0 0 18 10"><line x1="0.5" y1="5" x2="17.5" y2="5" stroke="#e6a23c" stroke-opacity="0.5" stroke-width="1.5"/><circle cx="9" cy="5" r="3.8" fill="#e6a23c"/></svg>
<div class="a t9" style="left:777.1px;top:398.5px;color:#444">A相</div>
<svg class="a" style="left:796.7px;top:400px" width="18" height="10" viewBox="0 0 18 10"><line x1="0.5" y1="5" x2="17.5" y2="5" stroke="#67c23a" stroke-opacity="0.5" stroke-width="1.5"/><circle cx="9" cy="5" r="3.8" fill="#67c23a"/></svg>
<div class="a t9" style="left:817.2px;top:398.5px;color:#444">B相</div>
<svg class="a" style="left:836.4px;top:400px" width="18" height="10" viewBox="0 0 18 10"><line x1="0.5" y1="5" x2="17.5" y2="5" stroke="#f56c6c" stroke-opacity="0.5" stroke-width="1.5"/><circle cx="9" cy="5" r="3.8" fill="#f56c6c"/></svg>
<div class="a t9" style="left:856.9px;top:398.5px;color:#444">C相</div>
</body></html>
